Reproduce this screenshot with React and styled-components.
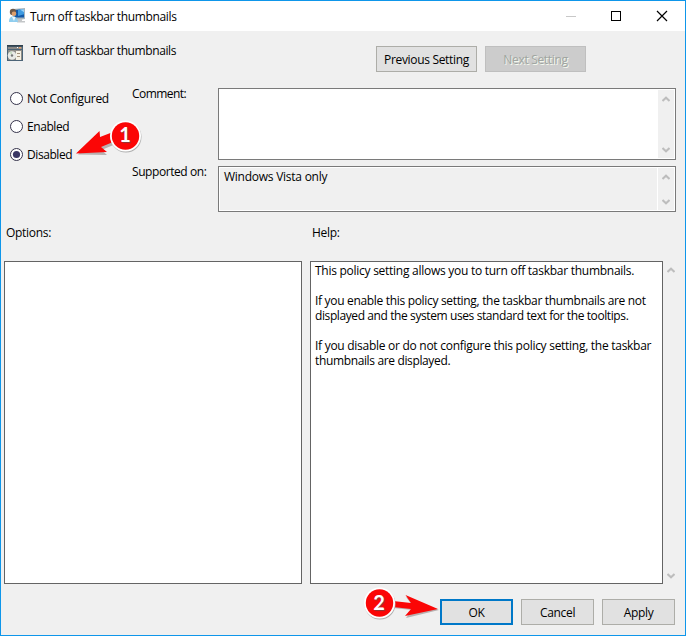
import React, { useState } from "react";
import styled, { createGlobalStyle } from "styled-components";

const helpText = [
  { text: "This policy setting allows you to turn off taskbar thumbnails.", spacing: -0.265 },
  { text: "" },
  { text: "If you enable this policy setting, the taskbar thumbnails are not", spacing: -0.32 },
  { text: "displayed and the system uses standard text for the tooltips.", spacing: -0.4 },
  { text: "" },
  { text: "If you disable or do not configure this policy setting, the taskbar", spacing: -0.275 },
  { text: "thumbnails are displayed.", spacing: -0.36 },
];

const states = [
  { name: "Not Configured", spacing: -0.27 },
  { name: "Enabled", spacing: -0.42 },
  { name: "Disabled", spacing: -0.42 },
];

const PolicyIcon = () => (
  <svg width="17" height="16" viewBox="0 0 17 16">
    <path d="M4 1l12-1v11l-6 1-6-1z" fill="#a9b6bd" />
    <path d="M5.500 2l9.500-.8V9.500H5.500z" fill="#1259a8" />
    <path d="M9 1.800l6-.6v5L9 8z" fill="#3f9be0" />
    <path d="M11 1.600l4-.4v3z" fill="#9ad4f7" />
    <path d="M9 11h4v2h3v1.500H8V13z" fill="#c3c6c8" />
    <circle cx="4" cy="4" r="3.200" fill="#6e5a49" />
    <circle cx="5" cy="5.800" r="2.300" fill="#dda06c" />
    <path d="M0 14c0-4 1.500-5.500 4-5.500S8.500 10 9 14z" fill="#8fcdee" />
    <path d="M3 9l2 4 1.500-4z" fill="#eefaff" />
  </svg>
);

const SettingIcon = () => (
  <svg width="16" height="16" viewBox="0 0 16 16">
    <path d="M0 0h16v16H0z" fill="#4c6477" />
    <path d="M0 0h16v1.500H0z" fill="#30404d" />
    <path d="M1 2h14v2H1z" fill="#8b8987" />
    <path d="M10 2h1v1h-1z" fill="#fff" />
    <path d="M12 2h2v1.500h-2z" fill="#e6a36d" />
    <path d="M1 5h14v10H1z" fill="#8f8d88" />
    <circle cx="5" cy="10.500" r="4.300" fill="#e9eae6" />
    <path d="M5 10.500L2 7.500 5 6.200z" fill="#c9dcc4" />
    <circle cx="5" cy="10.500" r="1.200" fill="#777" />
    <path d="M9 6h5v9H9z" fill="#f5f0e3" />
    <path d="M10 8h3v1h-3zM10 11h3v1h-3z" fill="#a3927c" />
  </svg>
);

const Chevron = ({ down }) => (
  <svg width="8" height="6" viewBox="0 0 8 6">
    <path
      d={down ? "M.5 1L4 4.3 7.5 1" : "M.5 5L4 1.7 7.5 5"}
      fill="none"
      stroke="#bdbdbd"
      strokeWidth="2"
    />
  </svg>
);

const ScrollBar = (props) => (
  <Track {...props}>
    <Chevron />
    <Chevron down />
  </Track>
);

const App = () => {
  const [selected, setSelected] = useState("Disabled");

  return (
    <>
      <GlobalStyle />
      <Window>
        <TitleBar>
          <PolicyIcon />
          <Title>Turn off taskbar thumbnails</Title>
          <WindowControls>
            <svg width="106" height="12" viewBox="0 0 106 12" shapeRendering="crispEdges">
              <path d="M1 6.5h10" stroke="#c8c8c8" />
              <path d="M46.5 1.5h9v9h-9z" fill="none" stroke="#000" />
              <path
                d="M92 1l10 10M102 1L92 11"
                stroke="#000"
                strokeWidth="1.2"
                shapeRendering="auto"
              />
            </svg>
          </WindowControls>
        </TitleBar>

        <Header>
          <SettingIcon />
          <Heading>Turn off taskbar thumbnails</Heading>
          <HeaderButtons>
            <Button $width={101}>Previous Setting</Button>
            <Button $width={101} disabled>Next Setting</Button>
          </HeaderButtons>
        </Header>

        <Fields>
          <RadioGroup>
            {states.map((state) => (
              <Radio key={state.name} onClick={() => setSelected(state.name)}>
                <svg width="13" height="13" viewBox="0 0 13 13">
                  <circle cx="6.5" cy="6.5" r="6" fill="#fff" stroke="#35334b" />
                  {selected === state.name && (
                    <circle cx="6.5" cy="6.5" r="3.6" fill="#3a3765" />
                  )}
                </svg>
                <Text $spacing={state.spacing}>{state.name}</Text>
              </Radio>
            ))}
          </RadioGroup>
          <FieldLabels>
            <FieldLabel $height={78} $spacing={-0.55}>Comment:</FieldLabel>
            <FieldLabel $height={15} $spacing={-0.43}>Supported on:</FieldLabel>
          </FieldLabels>
          <FieldBoxes>
            <FieldBox $height={72}>
              <FieldText />
              <ScrollBar />
            </FieldBox>
            <FieldBox $height={46} $readOnly>
              <FieldText>Windows Vista only</FieldText>
              <ScrollBar $divided />
            </FieldBox>
          </FieldBoxes>
        </Fields>

        <PanelLabels>
          <Text $spacing={-0.3}>Options:</Text>
          <Text $spacing={-0.3}>Help:</Text>
        </PanelLabels>

        <Panels>
          <Panel />
          <Panel>
            {helpText.map((line, i) => (
              <HelpLine key={i} $spacing={line.spacing}>{line.text}</HelpLine>
            ))}
          </Panel>
          <ScrollBar />
        </Panels>

        <Footer>
          <Button $width={73} $primary>OK</Button>
          <Button $width={73}>Cancel</Button>
          <Button $width={73}>Apply</Button>
        </Footer>

        <Marker $left={75} $top={115}>
          <svg width="72" height="44" viewBox="0 0 72 44">
            <path d="M38 18.500L25 23l-.5-5L3 39.500l29 .5-5.500-5 12-5z" fill="#b9b0b0" />
            <path d="M38 17L25 22l-.5-6L1 38.500l31-1.500-6-5 12-5z" fill="#fb0606" />
            <circle cx="51" cy="22" r="15.500" fill="#b0b0b0" />
            <circle cx="50.500" cy="21" r="15.500" fill="#fff" />
            <circle cx="50.500" cy="21" r="13.700" fill="#fb0606" />
          </svg>
          <MarkerNumber $left={36}>1</MarkerNumber>
        </Marker>
        <Marker $left={363} $top={583}>
          <svg width="78" height="40" viewBox="0 0 78 40">
            <path d="M30 19l18 1.500-5-6.500 33 13-33 8 6-8-19-2z" fill="#b9b0b0" />
            <path d="M30 18l18 2-5.500-8L75 26l-33 7 6-7-18-2z" fill="#fb0606" />
            <circle cx="17" cy="21" r="15.500" fill="#b0b0b0" />
            <circle cx="16.500" cy="20" r="15.500" fill="#fff" />
            <circle cx="16.500" cy="20" r="13.700" fill="#fb0606" />
          </svg>
          <MarkerNumber $left={2}>2</MarkerNumber>
        </Marker>
      </Window>
    </>
  );
};

const GlobalStyle = createGlobalStyle`
  * {
    box-sizing: border-box;
  }

  body {
    margin: 0;
    overflow: hidden;
  }

  svg {
    display: block;
    flex-shrink: 0;
  }
`;

const Window = styled.div`
  position: relative;
  width: 686px;
  height: 636px;
  border: 1px solid #0e96ea;
  background: #f0f0f0;
  color: #000;
  font-family: "Open Sans", "Noto Sans", sans-serif;
  font-size: 12px;
  line-height: 15px;
  letter-spacing: -0.25px;
  white-space: nowrap;
`;

const Text = styled.span`
  letter-spacing: ${(props) => props.$spacing}px;
`;

const TitleBar = styled.div`
  display: flex;
  align-items: center;
  height: 30px;
  padding-left: 8px;
  background: #fff;
`;

const Title = styled.span`
  margin-left: 4px;
  letter-spacing: -0.35px;
`;

const WindowControls = styled.div`
  margin-left: auto;
  padding-right: 14px;
`;

const Header = styled.div`
  display: flex;
  align-items: flex-start;
  height: 57px;
  padding: 14px 99px 0 6px;
`;

const Heading = styled.span`
  margin: -2px 0 0 8px;
  letter-spacing: -0.41px;
`;

const HeaderButtons = styled.div`
  display: flex;
  gap: 8px;
  margin: 1px 0 0 auto;
`;

const Button = styled.button`
  width: ${(props) => props.$width}px;
  height: 26px;
  padding: 0;
  border: ${(props) => (props.$primary ? "2px solid #0078c8" : "1px solid #adada8")};
  background: #e1e1e1;
  color: #000;
  font: inherit;
  letter-spacing: -0.32px;

  &:disabled {
    border-color: #bfbfbf;
    background: #ccc;
    color: #a0a5a0;
    text-shadow: 1px 1px 0 #f4f8ee;
  }
`;

const Fields = styled.div`
  display: grid;
  grid-template-columns: 131px 86px 458px;
  height: 124px;
`;

const RadioGroup = styled.div`
  display: flex;
  flex-direction: column;
  gap: 15px;
  padding: 4px 0 0 9px;
`;

const Radio = styled.div`
  display: flex;
  align-items: center;
  gap: 4px;
  height: 13px;
`;

const FieldLabels = styled.div`
  margin-top: -2px;
`;

const FieldLabel = styled.div`
  height: ${(props) => props.$height}px;
  letter-spacing: ${(props) => props.$spacing}px;
`;

const FieldBoxes = styled.div`
  display: flex;
  flex-direction: column;
  gap: 6px;
`;

const FieldBox = styled.div`
  display: flex;
  height: ${(props) => props.$height}px;
  padding: 1px;
  border: 1px solid #7a7a7a;
  background: ${(props) => (props.$readOnly ? "#f0f0f0" : "#fff")};
  box-shadow: inset 0 0 0 1px #fff;
`;

const FieldText = styled.div`
  flex: 1;
  padding: 1px 0 0 4px;
`;

const Track = styled.div`
  display: flex;
  flex-direction: column;
  align-items: center;
  justify-content: space-between;
  width: 16px;
  padding: 6px 0 5px;
  box-shadow: ${(props) => (props.$divided ? "-1px 0 0 #fff" : "none")};
  background: #f0f0f0;
`;

const PanelLabels = styled.div`
  display: grid;
  grid-template-columns: 306px 1fr;
  height: 49px;
  padding: 13px 0 0 5px;
`;

const Panels = styled.div`
  display: grid;
  grid-template-columns: 298px 353px 16px;
  column-gap: 8px;
  height: 323px;
  padding-left: 3px;

  ${Track} {
    margin-left: -8px;
  }
`;

const Panel = styled.div`
  padding: 1px 4px;
  border: 1px solid #646464;
  background: #fff;
`;

const HelpLine = styled.div`
  height: 15px;
  letter-spacing: ${(props) => props.$spacing || 0}px;
`;

const Footer = styled.div`
  display: flex;
  justify-content: flex-end;
  gap: 8px;
  padding: 15px 10px 0 0;
`;

/* Numbered step callouts that sit over the dialog */
const Marker = styled.div`
  position: absolute;
  left: ${(props) => props.$left - 1}px;
  top: ${(props) => props.$top - 1}px;
  pointer-events: none;
`;

const MarkerNumber = styled.span`
  position: absolute;
  left: ${(props) => props.$left}px;
  top: 6px;
  width: 28px;
  color: #fff;
  font: bold 20px/27px Lato, sans-serif;
  letter-spacing: 0;
  text-align: center;
  text-shadow: 1px 1px 1px #8a3a3a;
`;

export default App;
